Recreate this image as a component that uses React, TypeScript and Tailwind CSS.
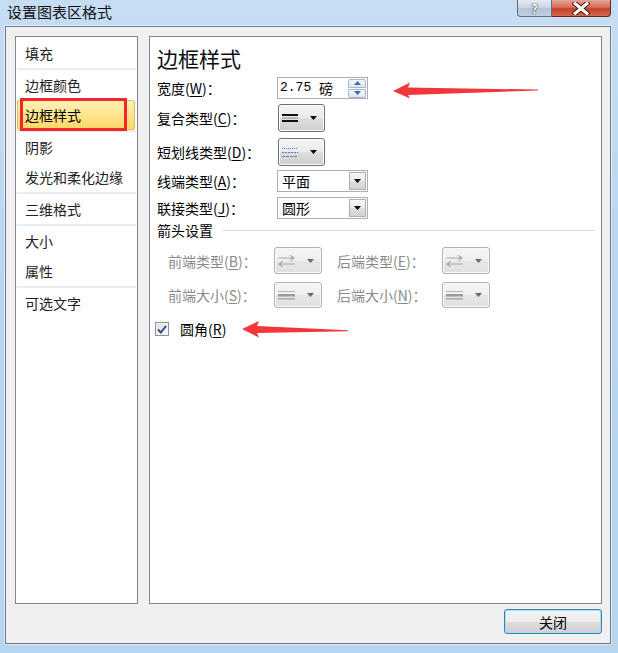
import React from "react";

function Tri({ color = "#000" }: { color?: string }) {
  return (
    <svg width="7" height="4" viewBox="0 0 7 4" className="shrink-0">
      <path d="M0 0H7L3.5 4Z" fill={color} />
    </svg>
  );
}

function CompoundIcon() {
  return (
    <svg width="16" height="8" viewBox="0 0 16 8" className="shrink-0">
      <rect x="0" y="0" width="16" height="2" fill="#111" />
      <rect x="0" y="3.5" width="16" height="1" fill="#8a8a8a" />
      <rect x="0" y="6" width="16" height="2" fill="#111" />
    </svg>
  );
}

function DashIcon() {
  return (
    <svg width="16" height="9" viewBox="0 0 16 9" className="shrink-0">
      <line x1="0" y1="0.5" x2="16" y2="0.5" stroke="#5d7fbf" strokeDasharray="1 1" />
      <line x1="0" y1="4.5" x2="16" y2="4.5" stroke="#5d7fbf" strokeDasharray="2 1" />
      <line x1="0" y1="8.5" x2="16" y2="8.5" stroke="#5d7fbf" strokeDasharray="3 1" />
    </svg>
  );
}

function ArrowTypeIcon() {
  return (
    <svg width="17" height="12" viewBox="0 0 17 12" className="shrink-0">
      <path d="M0 3H16M12.5 0.5L16 3L12.5 5.5" stroke="#a9a9a9" fill="none" strokeWidth="1.2" />
      <path d="M1 9H17M4.5 6.5L1 9L4.5 11.5" stroke="#a9a9a9" fill="none" strokeWidth="1.2" />
    </svg>
  );
}

function ArrowSizeIcon() {
  return (
    <svg width="17" height="9" viewBox="0 0 17 9" className="shrink-0">
      <rect x="0" y="0" width="17" height="1" fill="#b4b4b4" />
      <rect x="0" y="3" width="17" height="2.5" fill="#9c9c9c" />
      <rect x="0" y="7" width="17" height="1.5" fill="#aaaaaa" />
    </svg>
  );
}

function DropButton({ children }: { children: React.ReactNode }) {
  return (
    <div className="ml-[1px] flex h-[28px] w-[47px] items-center gap-[12px] rounded-[3px] border border-[#707070] bg-[linear-gradient(180deg,#f4f4f4_0%,#ebebeb_50%,#dddddd_52%,#cfcfcf_100%)] pl-[3px] shadow-[inset_0_0_0_1px_#fcfcfc]">
      {children}
      <Tri />
    </div>
  );
}

function DisabledButton({ children }: { children: React.ReactNode }) {
  return (
    <div className="flex h-full w-[48px] items-center gap-[12px] rounded-[3px] border border-[#adb2b5] bg-[linear-gradient(180deg,#f6f6f6_0%,#efefef_50%,#e6e6e6_52%,#e0e0e0_100%)] pl-[3px] shadow-[inset_0_0_0_1px_#fbfbfb]">
      {children}
      <Tri color="#6a6a6a" />
    </div>
  );
}

function Combo({ value }: { value: string }) {
  return (
    <div className="flex h-[22px] w-[91px] items-center justify-between border border-[#abadb3] bg-white">
      <span className="pl-[4px] text-[14px] leading-[20px] text-black">{value}</span>
      <div className="mr-[1px] flex h-[18px] w-[17px] items-center justify-center border border-[#a9b0b8] bg-[linear-gradient(180deg,#f5f5f5_0%,#ececec_50%,#dedede_52%,#d3d3d3_100%)]">
        <Tri />
      </div>
    </div>
  );
}

function Key({ k }: { k: string }) {
  return <u className="underline underline-offset-[2px]">{k}</u>;
}

const groups: string[][] = [
  ["填充"],
  ["边框颜色", "边框样式"],
  ["阴影", "发光和柔化边缘"],
  ["三维格式"],
  ["大小", "属性"],
  ["可选文字"],
];

export default function App() {
  return (
    <div className="relative h-[653px] w-[618px] overflow-hidden bg-[linear-gradient(180deg,#c6def4_0%,#b9d7f2_40%,#b6d5f1_100%)] font-['Noto_Sans_CJK_SC','Noto_Sans',sans-serif] text-black">
      {/* Title bar */}
      <div className="flex h-[26px] items-start justify-between">
        <div className="pl-[7px] pt-[3px] text-[15px] leading-[18px] text-[#111]">设置图表区格式</div>
        <div className="mr-[7px] flex">
          <div className="flex h-[17px] w-[35px] items-center justify-center rounded-bl-[4px] border border-t-0 border-[#5f6f83] bg-[linear-gradient(180deg,#e3eaf2_0%,#c9d5e2_50%,#b4c4d6_52%,#c2d0df_100%)] pt-[1px]">
            <span className="text-[13px] font-bold leading-[14px] text-white [text-shadow:0_0_1px_#2b3a4d,0_0_1px_#2b3a4d,0_0_1px_#2b3a4d]">?</span>
          </div>
          <div className="flex h-[17px] w-[59px] items-center justify-center rounded-br-[4px] border border-l-0 border-t-0 border-[#6b2218] bg-[linear-gradient(180deg,#e7a597_0%,#d66f5c_45%,#c4402a_55%,#d6694f_100%)]">
            <svg width="18" height="13" viewBox="0 0 18 13">
              <path d="M3 1.5L15 11.5M15 1.5L3 11.5" stroke="#3a1a14" strokeWidth="5" strokeLinecap="square" />
              <path d="M3 1.5L15 11.5M15 1.5L3 11.5" stroke="#ffffff" strokeWidth="3" strokeLinecap="square" />
            </svg>
          </div>
        </div>
      </div>

      {/* Dialog frame */}
      <div className="ml-[5px] flex h-[618px] w-[606px] flex-col border border-[#6e7782] bg-[#f0f0f0] pl-[9px] pt-[9px] shadow-[0_0_0_1px_rgba(255,255,255,0.55)]">
        <div className="flex h-[568px] gap-[11px]">
          {/* Left nav */}
          <div className="relative w-[123px] border border-[#828790] bg-white pt-[1px]">
            {groups.map((g, gi) => (
              <div key={gi}>
                {gi > 0 && <div className="mx-[1px] h-[2px] bg-[#e9ecef]" />}
                {g.map((item) =>
                  item === "边框样式" ? (
                    <div
                      key={item}
                      className="ml-[1px] mr-[2px] flex h-[30px] items-center rounded-[2px] border border-[#dfbe62] bg-[linear-gradient(180deg,#fff0b3_0%,#ffe58f_45%,#fed767_100%)] pl-[7px] text-[14px] leading-[20px]"
                    >
                      {item}
                    </div>
                  ) : (
                    <div key={item} className="flex h-[30px] items-center pl-[9px] text-[14px] leading-[20px] text-[#222]">
                      {item}
                    </div>
                  )
                )}
              </div>
            ))}
            <div className="pointer-events-none absolute left-[4px] top-[61px] h-[33px] w-[107px] border-[3px] border-[#f0282c]" />
          </div>

          {/* Right content */}
          <div className="w-[453px] border border-[#828790] bg-white pl-[7px] text-[14px] leading-[20px]">
            <div className="mt-[7px] h-[28px] text-[21px] leading-[28px] text-[#0c0c14]">边框样式</div>

            <div className="mt-[2px] flex h-[28px] items-center">
              <div className="w-[120px]">
                宽度(<Key k="W" />)：
              </div>
              <div className="flex h-[22px] w-[91px] items-center justify-between border border-[#abadb3] bg-white">
                <span className="flex items-center pl-[2px]">
                  <span className="whitespace-pre font-['Liberation_Mono',monospace] text-[13px] leading-[18px]">{"2.75\u00a0"}</span>
                  <span className="text-[14px] leading-[18px]">磅</span>
                </span>
                <div className="mr-[1px] flex h-[19px] w-[18px] flex-col gap-[1px]">
                  <div className="flex h-[9px] items-center justify-center rounded-t-[2px] border border-[#aab7c9] bg-[linear-gradient(180deg,#f3f7fb,#dde7f2)]">
                    <svg width="7" height="4" viewBox="0 0 7 4">
                      <path d="M0 4H7L3.5 0Z" fill="#3e68b0" />
                    </svg>
                  </div>
                  <div className="flex h-[9px] items-center justify-center rounded-b-[2px] border border-[#aab7c9] bg-[linear-gradient(180deg,#f3f7fb,#dde7f2)]">
                    <svg width="7" height="4" viewBox="0 0 7 4">
                      <path d="M0 0H7L3.5 4Z" fill="#3e68b0" />
                    </svg>
                  </div>
                </div>
              </div>
            </div>

            <div className="mt-[2px] flex h-[28px] items-center">
              <div className="w-[120px]">
                复合类型(<Key k="C" />)：
              </div>
              <DropButton>
                <CompoundIcon />
              </DropButton>
            </div>

            <div className="mt-[6px] flex h-[28px] items-center">
              <div className="w-[120px]">
                短划线类型(<Key k="D" />)：
              </div>
              <DropButton>
                <DashIcon />
              </DropButton>
            </div>

            <div className="mt-[4px] flex h-[22px] items-center">
              <div className="w-[120px]">
                线端类型(<Key k="A" />)：
              </div>
              <Combo value="平面" />
            </div>

            <div className="mt-[5px] flex h-[22px] items-center">
              <div className="w-[120px]">
                联接类型(<Key k="J" />)：
              </div>
              <Combo value="圆形" />
            </div>

            <div className="mt-[1px] flex h-[20px] items-center pr-[6px]">
              <span>箭头设置</span>
              <div className="ml-[9px] h-px flex-1 bg-[#d5dfe5]" />
            </div>

            <div className="mt-[7px] flex h-[27px] items-center pl-[11px] text-[#8a8a8a]">
              <div className="w-[106px]">
                前端类型(<Key k="B" />)：
              </div>
              <DisabledButton>
                <ArrowTypeIcon />
              </DisabledButton>
              <div className="ml-[15px] w-[105px]">
                后端类型(<Key k="E" />)：
              </div>
              <DisabledButton>
                <ArrowTypeIcon />
              </DisabledButton>
            </div>

            <div className="mt-[8px] flex h-[26px] items-center pl-[11px] text-[#8a8a8a]">
              <div className="w-[106px]">
                前端大小(<Key k="S" />)：
              </div>
              <DisabledButton>
                <ArrowSizeIcon />
              </DisabledButton>
              <div className="ml-[15px] w-[105px]">
                后端大小(<Key k="N" />)：
              </div>
              <DisabledButton>
                <ArrowSizeIcon />
              </DisabledButton>
            </div>

            <div className="-ml-[2px] mt-[13px] flex h-[16px] items-center">
              <div className="flex h-[14px] w-[14px] items-center justify-center border border-[#8e8f8f] bg-[linear-gradient(135deg,#dcdcdc,#fbfbfb)] shadow-[inset_0_0_0_1px_#f4f4f4]">
                <svg width="10" height="9" viewBox="0 0 10 9">
                  <path d="M1 4.5L3.8 7.5L9 1" stroke="#2c4f94" strokeWidth="2" fill="none" />
                </svg>
              </div>
              <span className="ml-[11px]">
                圆角(<Key k="R" />)
              </span>
            </div>
          </div>
        </div>

        <div className="mt-[5px] flex justify-end pr-[8px]">
          <div className="flex h-[25px] w-[98px] items-center justify-center rounded-[3px] border border-[#3c7fb1] bg-[linear-gradient(180deg,#f4f4f4_0%,#ebebeb_50%,#dddddd_52%,#d0d0d0_100%)] text-[14px] leading-[20px] shadow-[inset_0_0_0_1px_#a6def8]">
            关闭
          </div>
        </div>
      </div>

      {/* Red annotation arrows */}
      <svg className="pointer-events-none absolute left-0 top-0" width="618" height="653" viewBox="0 0 618 653">
        <path d="M393 91 L410 82.5 L408 87.5 L538 89.6 L538 90.6 L408 95 L410 98.5 Z" fill="#f2373a" />
        <path d="M242 329 L259 321 L257 326 L348 330.3 L348 331.3 L257 333 L259 337.5 Z" fill="#f2373a" />
      </svg>
    </div>
  );
}
